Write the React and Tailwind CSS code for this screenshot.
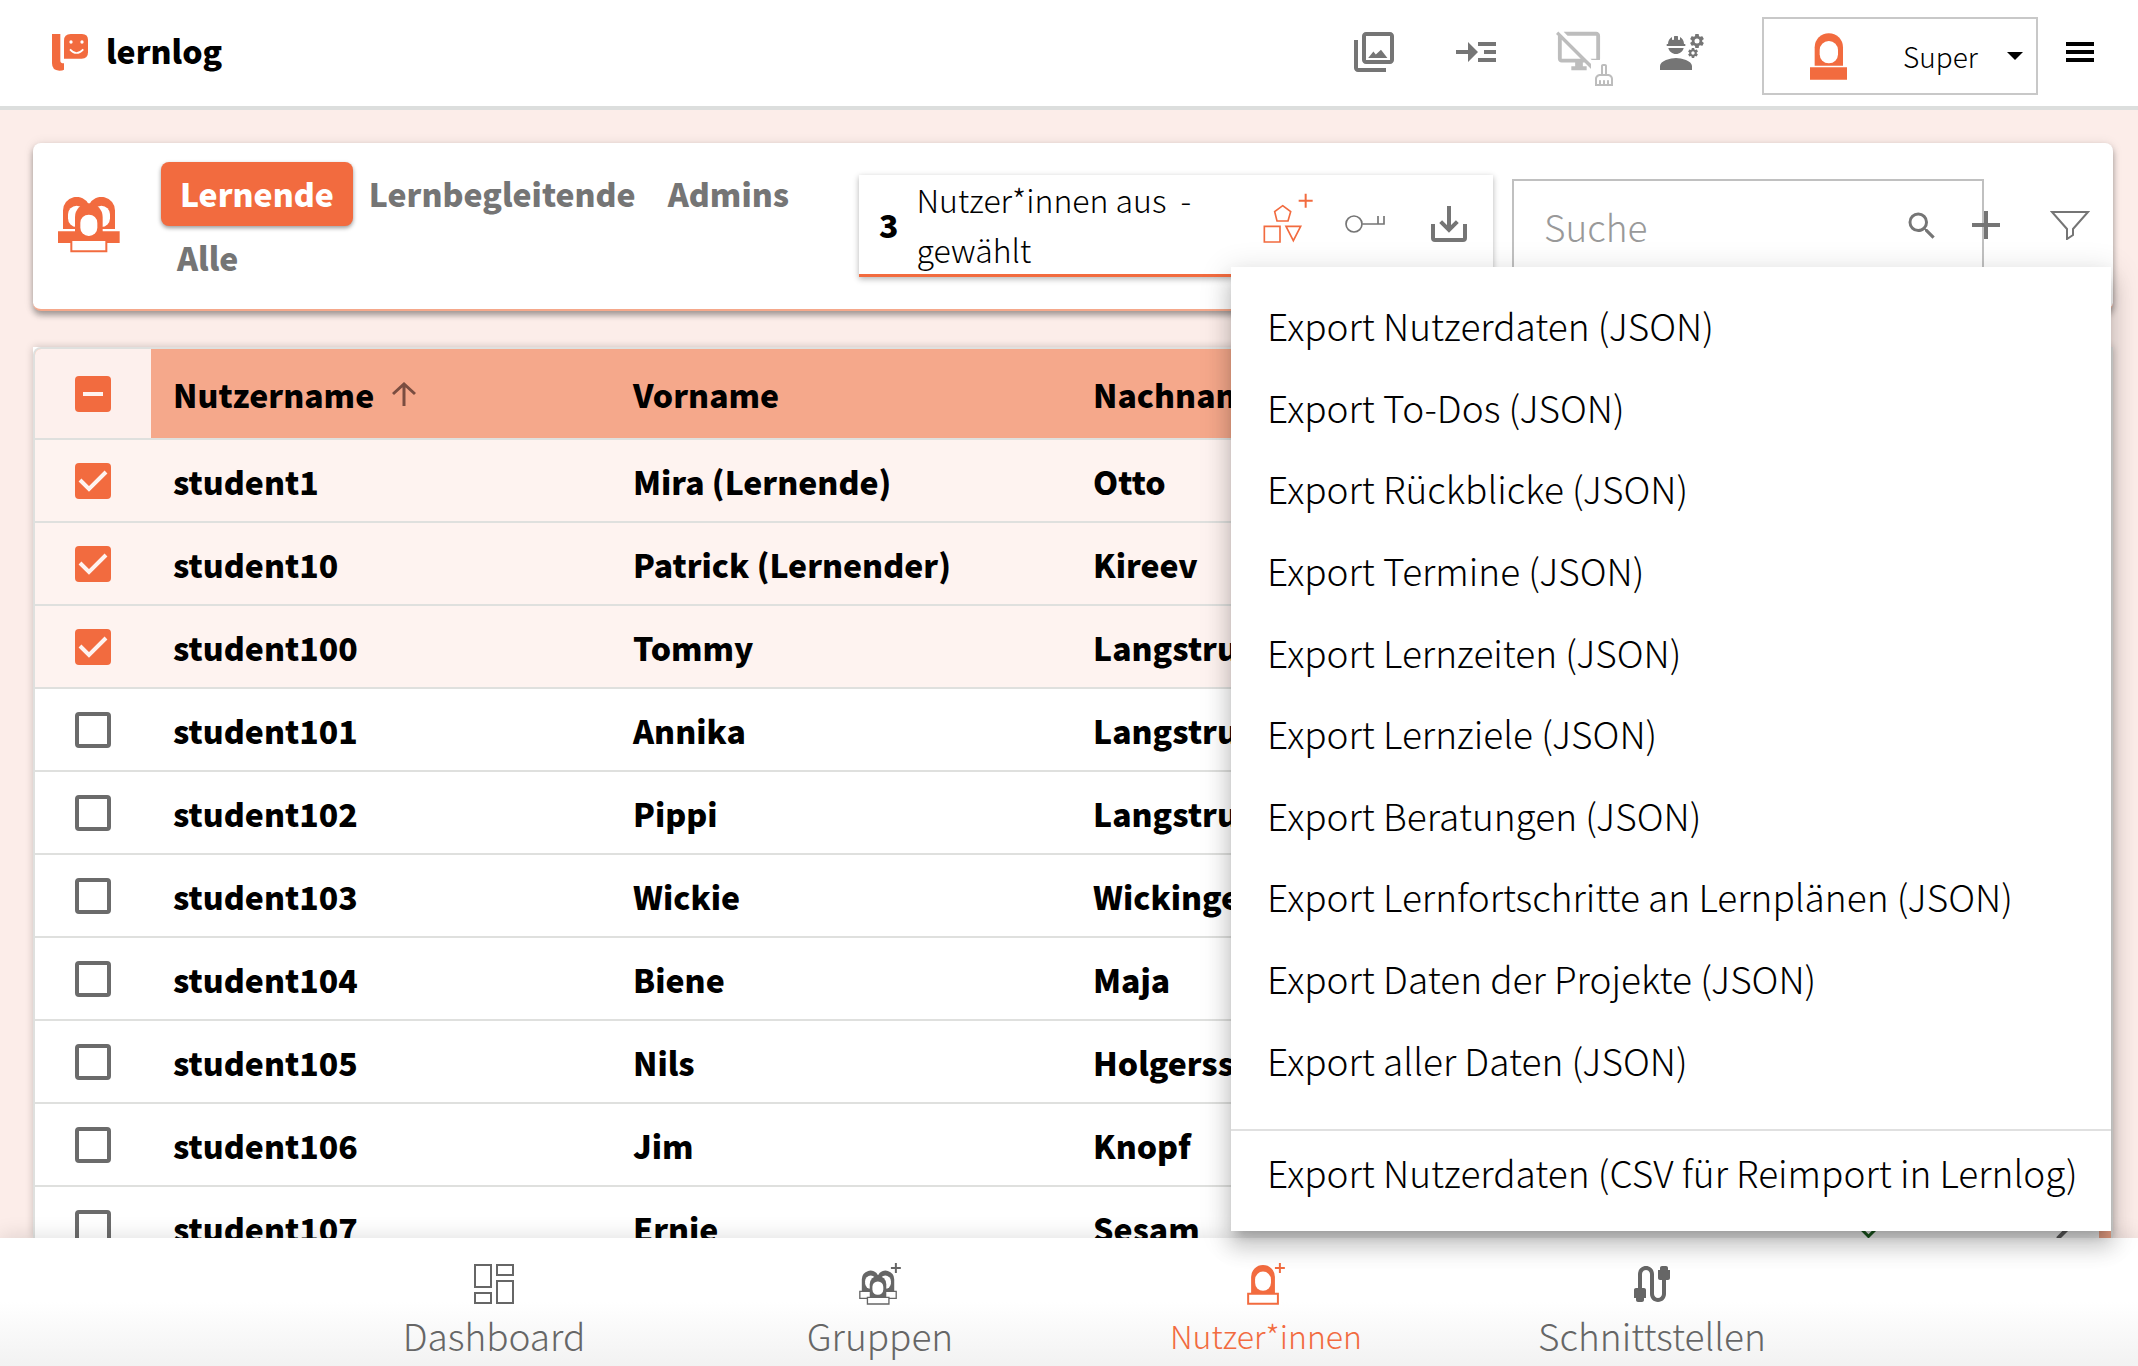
import React from "react";
import {
  MdCable,
  MdCheck,
  MdChevronRight,
  MdDesktopAccessDisabled,
  MdEngineering,
  MdOutlineCleaningServices,
  MdReadMore,
  MdSearch,
} from "react-icons/md";

const tabs = ["Lernende", "Lernbegleitende", "Admins", "Alle"];

const users = [
  { login: "student1", first: "Mira (Lernende)", last: "Otto", selected: true },
  { login: "student10", first: "Patrick (Lernender)", last: "Kireev", selected: true },
  { login: "student100", first: "Tommy", last: "Langstrumpf", selected: true },
  { login: "student101", first: "Annika", last: "Langstrumpf" },
  { login: "student102", first: "Pippi", last: "Langstrumpf" },
  { login: "student103", first: "Wickie", last: "Wickinger" },
  { login: "student104", first: "Biene", last: "Maja" },
  { login: "student105", first: "Nils", last: "Holgersson" },
  { login: "student106", first: "Jim", last: "Knopf" },
  { login: "student107", first: "Ernie", last: "Sesam" },
];

const exportItems = [
  "Export Nutzerdaten (JSON)",
  "Export To-Dos (JSON)",
  "Export Rückblicke (JSON)",
  "Export Termine (JSON)",
  "Export Lernzeiten (JSON)",
  "Export Lernziele (JSON)",
  "Export Beratungen (JSON)",
  "Export Lernfortschritte an Lernplänen (JSON)",
  "Export Daten der Projekte (JSON)",
  "Export aller Daten (JSON)",
];

function LogoIcon() {
  return (
    <svg viewBox="156 96 108 111" className="h-[37px] w-9" fill="none">
      <path d="M156 96h25v80q0 8 11 8v19q-4 3-14 3-22 0-22-22z" fill="#f26b3f" />
      <path d="M192 170v-54q0-20 20-20h34q18 0 18 18v37q0 19-19 19z" fill="#f26b3f" />
      <circle cx="213" cy="120" r="5" fill="#fff" />
      <circle cx="246" cy="120" r="5" fill="#fff" />
      <path d="M210 142q19 22 40 0" stroke="#fff" strokeWidth="5" />
    </svg>
  );
}

function GalleryIcon() {
  return (
    <svg viewBox="0 0 24 24" className="size-12" fill="currentColor">
      <path d="M20 4v12H8V4h12m0-2H8c-1.1 0-2 .9-2 2v12c0 1.1.9 2 2 2h12c1.1 0 2-.9 2-2V4c0-1.1-.9-2-2-2z" />
      <path d="M9.1 15l2.6-3.2 1.2 1.5 2.6-2.4 3.2 4.1zM2 6v14c0 1.1.9 2 2 2h14v-2H4V6z" />
    </svg>
  );
}

function ScreenCleanIcon() {
  return (
    <svg viewBox="0 0 60 60" className="size-[60px]">
      <MdDesktopAccessDisabled size={46} x={0} y={0} />
      <path d="M35 32h25v28H35z" fill="#fff" />
      <MdOutlineCleaningServices size={24} x={36} y={35} />
    </svg>
  );
}

function PersonIcon() {
  return (
    <svg viewBox="213 67 111 141" className="h-[47px] w-[37px]">
      <path d="M227 165v-55a42.500 42.500 0 0 1 85 0v55z" fill="#f26b3f" />
      <rect x="242" y="91" width="55" height="67" rx="27" fill="#fff" />
      <path d="M213 170h111v37H213z" fill="#f26b3f" />
    </svg>
  );
}

function GroupIcon() {
  return (
    <svg viewBox="174 594 186 168" className="h-14 w-[62px]">
      <path d="M189 690v-55a41 41 0 0 1 78-18a41 41 0 0 1 78 18v55z" fill="#f26b3f" />
      <rect x="204" y="620" width="52" height="64" rx="26" fill="#fff" />
      <rect x="278" y="620" width="52" height="64" rx="26" fill="#fff" />
      <path d="M174 697h185v35H174z" fill="#f26b3f" />
      <path d="M225 722v-68a41.500 41.500 0 0 1 83 0v68z" fill="#f26b3f" />
      <rect x="241" y="647" width="51" height="64" rx="25" fill="#fff" />
      <path d="M214 723h105v34H214z" fill="#fff" stroke="#f26b3f" strokeWidth="6" />
    </svg>
  );
}

function ShapesPlusIcon() {
  return (
    <svg viewBox="70 40 150 150" className="size-[50px]" fill="none" stroke="#f26b3f" strokeWidth="5">
      <path d="M74 140h47v47H74zM139 140h44l-22 43zM129 78l24 18-8 28h-33l-7-28z" />
      <path d="M198 42v42M177 63h42" strokeWidth="6" />
    </svg>
  );
}

function KeyIcon() {
  return (
    <svg viewBox="318 105 120 60" className="h-5 w-10" fill="none" stroke="currentColor" strokeWidth="5">
      <circle cx="345" cy="135" r="24" />
      <path d="M370 135h65v-24M417 111v24" />
    </svg>
  );
}

function DownloadIcon() {
  return (
    <svg viewBox="576 81 108 108" className="size-9" fill="none" stroke="currentColor" strokeWidth="12">
      <path d="M630 81v68M605 128l25 25 25-25M582 135v42q0 6 6 6h84q6 0 6-6v-42" />
    </svg>
  );
}

function FilterIcon() {
  return (
    <svg viewBox="0 0 40 30" className="h-[30px] w-10" fill="none" stroke="currentColor" strokeWidth="2">
      <path d="M2 2h36L23 19v6l-6 4V19z" />
    </svg>
  );
}

function DashboardIcon() {
  return (
    <svg viewBox="0 0 40 40" className="size-10" fill="none" stroke="currentColor" strokeWidth="2">
      <path d="M1 1h16v22H1zM23 1h16v10H23zM1 29h16v10H1zM23 17h16v22H23z" />
    </svg>
  );
}

function GroupPlusIcon() {
  return (
    <svg viewBox="120 66 126 127" className="size-[42px]" stroke="currentColor" fill="currentColor" strokeWidth="0">
      <path d="M128 151v-35a26 26 0 0 1 49-13a26 26 0 0 1 49 13v35z" />
      <rect x="138" y="104" width="34" height="40" rx="17" fill="#fff" />
      <rect x="182" y="104" width="34" height="40" rx="17" fill="#fff" />
      <path d="M122 152h110v21H122z" fill="#fff" strokeWidth="4" />
      <path d="M152 170v-40a25 25 0 0 1 50 0v40z" />
      <rect x="160" y="122" width="33" height="40" rx="16" fill="#fff" />
      <path d="M145 170h65v20h-65z" fill="#fff" strokeWidth="4" />
      <path d="M231 66v30M216 81h30" strokeWidth="6" />
    </svg>
  );
}

function PersonPlusIcon() {
  return (
    <svg viewBox="1290 78 114 127" className="h-[42px] w-[38px]" stroke="currentColor" fill="currentColor" strokeWidth="0">
      <path d="M1302 170v-50a36 36 0 0 1 72 0v50z" />
      <rect x="1314" y="104" width="48" height="58" rx="24" fill="#fff" />
      <path d="M1293 171h90v30h-90z" fill="#fff" strokeWidth="6" />
      <path d="M1389 78v30M1374 93h30" strokeWidth="6" />
    </svg>
  );
}

const navItems = [
  { label: "Dashboard", icon: <DashboardIcon /> },
  { label: "Gruppen", icon: <GroupPlusIcon /> },
  { label: "Nutzer*innen", icon: <PersonPlusIcon />, active: true },
  { label: "Schnittstellen", icon: <MdCable size={48} /> },
];

function Checkbox({ label, checked, indeterminate }) {
  const filled = checked || indeterminate;
  return (
    <label className="grid size-9">
      <input
        type="checkbox"
        aria-label={label}
        defaultChecked={checked}
        className={`col-start-1 row-start-1 size-9 appearance-none rounded ${
          filled ? "bg-[#f26b3f]" : "border-4 border-[#6b6b6b]"
        }`}
      />
      {filled && (
        <svg
          viewBox="0 0 36 36"
          className="pointer-events-none col-start-1 row-start-1 size-9"
          fill="none"
          stroke="#fef3f0"
          strokeWidth="4"
        >
          <path d={indeterminate ? "M8 18h20" : "M5 17l9 9L31 9"} />
        </svg>
      )}
    </label>
  );
}

function Header() {
  return (
    <header className="flex h-[110px] shrink-0 items-center border-b-4 border-[#dcdedd] bg-white pr-11 pb-0.5 pl-[52px]">
      <a href="#" className="flex items-center gap-[18px] text-[32px] font-black text-black">
        <LogoIcon />
        <span className="pb-1">lernlog</span>
      </a>
      <div className="ml-auto flex items-center text-[#757575]">
        <div className="flex items-center gap-[54px]">
          <button type="button" aria-label="Galerie">
            <GalleryIcon />
          </button>
          <button type="button" aria-label="Importieren">
            <MdReadMore size={48} />
          </button>
          <button type="button" aria-label="Bildschirm leeren" className="-mr-3 mt-3 ml-0.5 text-[#bdbdbd]">
            <ScreenCleanIcon />
          </button>
          <button type="button" aria-label="Verwaltung">
            <MdEngineering size={48} />
          </button>
        </div>
        <div className="mt-2 ml-14 flex h-[78px] w-[276px] items-center border-2 border-[#c8c8c8] pl-[46px] text-black">
          <PersonIcon />
          <select aria-label="Konto" className="ml-14 w-[84px] appearance-none text-[28px] font-light">
            <option>Super</option>
          </select>
          <svg viewBox="0 0 16 8" className="ml-5 h-2 w-4">
            <path d="M0 0h16L8 8z" />
          </svg>
        </div>
        <button type="button" aria-label="Menü" className="ml-7 text-black">
          <svg viewBox="0 0 28 20" className="h-5 w-7" fill="currentColor">
            <path d="M0 0h28v4H0zM0 8h28v4H0zM0 16h28v4H0z" />
          </svg>
        </button>
      </div>
    </header>
  );
}

function ExportMenu() {
  return (
    <div
      role="menu"
      className="absolute top-[124px] right-0.5 flex w-[880px] flex-col bg-white pt-[18px] pb-[18px] text-[37px] font-light text-black shadow-[0_10px_10px_-6px_rgba(0,0,0,0.2),0_16px_20px_2px_rgba(0,0,0,0.14),0_6px_28px_4px_rgba(0,0,0,0.12)]"
    >
      <div className="flex h-[816px] flex-col">
        {exportItems.map((item) => (
          <button key={item} type="button" role="menuitem" className="flex-1 px-9 text-left leading-none">
            {item}
          </button>
        ))}
      </div>
      <hr className="mt-7 border-t-2 border-[#e0e0e0]" />
      <button type="button" role="menuitem" className="h-[82px] px-9 text-left leading-none whitespace-nowrap">
        Export Nutzerdaten (CSV für Reimport in Lernlog)
      </button>
    </div>
  );
}

function Toolbar() {
  return (
    <section className="relative z-10 flex h-[168px] shrink-0 rounded-lg border-b-2 border-[#f5a88b] bg-white pl-[25px] text-[#757575] shadow-[0_4px_6px_rgba(0,0,0,0.35),0_0_12px_rgba(0,0,0,0.08)]">
      <div className="mt-[54px] shrink-0">
        <GroupIcon />
      </div>
      <nav className="mt-[19px] ml-[41px] flex min-w-0 flex-1 flex-wrap content-start">
        {tabs.map((tab, i) => (
          <button
            key={tab}
            type="button"
            className={`h-16 rounded-lg pb-0.5 text-[32px] leading-none font-black ${
              i === 0
                ? "bg-[#f26b3f] px-[19px] text-white shadow-[0_2px_4px_rgba(0,0,0,0.4)]"
                : "px-4"
            }`}
          >
            {tab}
          </button>
        ))}
      </nav>
      <div className="mt-8 flex h-[102px] w-[634px] shrink-0 items-center border-b-3 border-[#f26b3f] pb-0.5 pl-5 text-black shadow-[0_2px_6px_rgba(0,0,0,0.3)]">
        <span className="text-[32px] font-black">3</span>
        <p className="ml-[18px] w-[300px] text-[32px] leading-[50px] font-light">
          Nutzer*innen aus&nbsp; -<br />
          gewählt
        </p>
        <div className="ml-auto flex items-center gap-[46px] pr-[26px] text-[#757575]">
          <button type="button" aria-label="Gruppe zuweisen" className="-mr-3.5 mb-3">
            <ShapesPlusIcon />
          </button>
          <button type="button" aria-label="Passwort">
            <KeyIcon />
          </button>
          <button type="button" aria-label="Exportieren">
            <DownloadIcon />
          </button>
        </div>
      </div>
      <label className="mt-9 ml-[19px] flex h-[100px] w-[472px] shrink-0 items-center border-2 border-[#c0c0c0] pr-[42px] pb-1.5 pl-[30px]">
        <input
          type="text"
          placeholder="Suche"
          className="min-w-0 flex-1 text-[37px] leading-[50px] font-light outline-none placeholder:text-[#999]"
        />
        <MdSearch size={36} />
      </label>
      <div className="mt-[62px] -ml-3 flex h-10 shrink-0 items-center gap-[50px] pr-[23px]">
        <button type="button" aria-label="Hinzufügen">
          <svg viewBox="0 0 28 28" className="size-7" stroke="currentColor" strokeWidth="4">
            <path d="M14 0v28M0 14h28" />
          </svg>
        </button>
        <button type="button" aria-label="Filter">
          <FilterIcon />
        </button>
      </div>
      <ExportMenu />
    </section>
  );
}

function UserTable() {
  return (
    <section className="flex min-h-0 flex-1 bg-white shadow-[0_0_8px_rgba(0,0,0,0.2)]">
      <div className="flex min-w-0 flex-1 overflow-hidden rounded-tl-lg border-2 border-b-0 border-[#dfe0de]">
        <table className="w-full table-fixed border-collapse self-start text-left text-[32px] leading-none font-black">
          <colgroup>
            <col className="w-[116px]" />
            <col className="w-[460px]" />
            <col className="w-[460px]" />
            <col className="w-[460px]" />
            <col />
            <col className="w-[76px]" />
          </colgroup>
          <thead>
            <tr className="h-[90px] border-b-2 border-[#dfe0de] bg-[#f5a88b]">
              <th className="bg-[#fdf0ed] pl-10">
                <Checkbox label="Alle auswählen" indeterminate />
              </th>
              <th className="px-[22px] font-black">
                <span className="flex items-center gap-[18px]">
                  Nutzername
                  <svg viewBox="0 0 24 24" className="size-6" fill="none" stroke="#7a4d40" strokeWidth="3">
                    <path d="M12 24V2M1 12L12 2l11 10" />
                  </svg>
                </span>
              </th>
              <th className="px-[22px] font-black">Vorname</th>
              <th className="px-[22px] font-black">Nachname</th>
              <th />
              <th />
            </tr>
          </thead>
          <tbody>
            {users.map((user) => (
              <tr
                key={user.login}
                className={`h-[83px] border-b-2 border-[#dfe0de] ${user.selected ? "bg-[#fef3f0]" : "bg-white"}`}
              >
                <td className="pl-10">
                  <Checkbox label={user.login} checked={user.selected} />
                </td>
                <td className="px-[22px]">{user.login}</td>
                <td className="px-[22px]">{user.first}</td>
                <td className="px-[22px]">{user.last}</td>
                <td>
                  <MdCheck size={36} className="ml-auto mr-[132px] text-[#1b5e20]" />
                </td>
                <td>
                  <MdChevronRight size={48} className="ml-4 text-[#616161]" />
                </td>
              </tr>
            ))}
          </tbody>
        </table>
        <div className="w-3 shrink-0 bg-[#f5a88b]" />
      </div>
    </section>
  );
}

function BottomNav() {
  return (
    <nav className="relative grid h-32 shrink-0 grid-cols-[repeat(4,386px)] justify-center bg-linear-to-b from-white from-50% to-[#f2f2f2] pl-2 shadow-[0_-2px_20px_rgba(0,0,0,0.12)]">
      {navItems.map((item) => (
        <a
          key={item.label}
          href="#"
          className={`flex flex-col items-center pt-[19px] leading-[48px] font-light ${
            item.active ? "text-[32px] text-[#f26b3f]" : "text-[37px] text-[#666]"
          }`}
        >
          <span className="flex h-[54px] items-center">{item.icon}</span>
          {item.label}
        </a>
      ))}
    </nav>
  );
}

export default function App() {
  return (
    <div className="flex h-screen flex-col overflow-hidden bg-[#fcede9] font-['Noto_Sans_CJK_SC',sans-serif] text-black">
      <Header />
      <main className="flex min-h-0 flex-1 flex-col gap-9 pt-[33px] pr-[25px] pl-[33px]">
        <Toolbar />
        <UserTable />
      </main>
      <BottomNav />
    </div>
  );
}
